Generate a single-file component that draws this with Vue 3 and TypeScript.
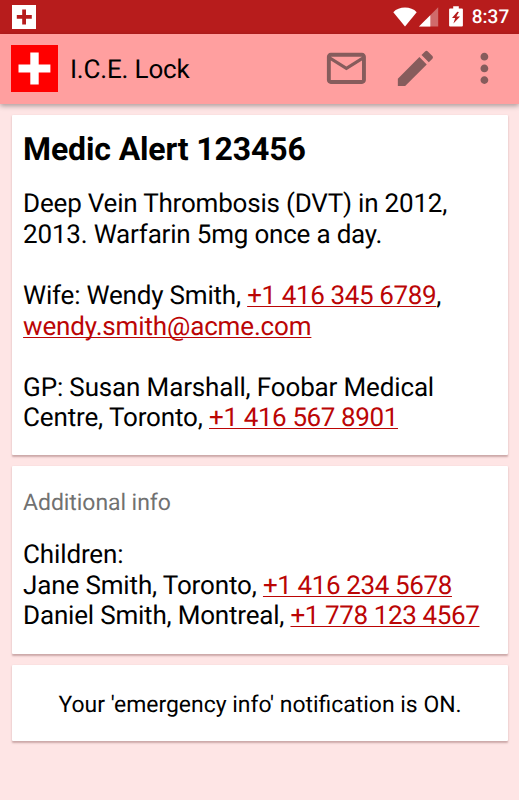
<script setup lang="ts">
interface Segment {
  text: string
  href?: string
  kind?: 'phone' | 'note'
}

type Line = Segment[]

const alertLines: Line[] = [
  [{ text: 'Deep Vein Thrombosis (DVT) in 2012,', kind: 'note' }],
  [{ text: '2013. Warfarin 5mg once a day.', kind: 'note' }],
  [],
  [
    { text: 'Wife: Wendy Smith, ', kind: 'note' },
    { text: '+1 416 345 6789', href: 'tel:+14163456789', kind: 'phone' },
    { text: ',' },
  ],
  [{ text: 'wendy.smith@acme.com', href: 'mailto:wendy.smith@acme.com' }],
  [],
  [{ text: 'GP: Susan Marshall, Foobar Medical' }],
  [
    { text: 'Centre, Toronto, ' },
    { text: '+1 416 567 8901', href: 'tel:+14165678901', kind: 'phone' },
  ],
]

const additionalLines: Line[] = [
  [{ text: 'Children:' }],
  [
    { text: 'Jane Smith, Toronto, ' },
    { text: '+1 416 234 5678', href: 'tel:+14162345678', kind: 'phone' },
  ],
  [
    { text: 'Daniel Smith, Montreal, ', kind: 'note' },
    { text: '+1 778 123 4567', href: 'tel:+17781234567', kind: 'phone' },
  ],
]
</script>

<template>
  <div class="screen">
    <div class="status-bar">
      <svg class="status-cross" viewBox="0 0 24 24">
        <rect width="24" height="24" fill="#fff" />
        <path d="M10.2 4.5h3.8v5.6h5.8v3.6H14v5.8h-3.8v-5.8H4.8v-3.6h5.4z" fill="#b71c1c" />
      </svg>
      <div class="status-icons">
        <svg class="wifi" viewBox="0 0 24 20">
          <path d="M12 19.6 .3 5.2C3.2 2 7.3.5 12 .5s8.8 1.5 11.7 4.7z" fill="#fff" />
        </svg>
        <svg class="signal" viewBox="0 0 20 20">
          <path d="M0 19.5 19.2.3v19.2z" fill="#fff" opacity=".35" />
          <path d="M0 19.5 11.3 8.2v11.3z" fill="#fff" />
        </svg>
        <svg class="battery" viewBox="0 0 14 21">
          <path
            fill="#fff"
            fill-rule="evenodd"
            d="M4.2 .3h5.6v2.2h3.1q1 0 1 1v16q0 1-1 1H1.1q-1 0-1-1v-16q0-1 1-1h3.1zM8.3 5.7 3 12.1h3.2l-1.8 5.5 6.7-7.2H7.4l2.5-4.3z"
          />
        </svg>
        <span class="clock">8:37</span>
      </div>
    </div>

    <header class="app-bar">
      <svg class="logo" viewBox="0 0 47 47">
        <rect width="47" height="47" fill="#f00" />
        <path d="M19.3 7.6h8.4v11.8h11.7v8.2H27.7v11.8h-8.4V27.6H7.5v-8.2h11.8z" fill="#fff" />
      </svg>
      <h1 class="title">I.C.E. Lock</h1>
      <nav class="actions">
        <svg class="action-icon" viewBox="0 0 24 24">
          <path
            d="M20 4H4c-1.1 0-2 .9-2 2v12c0 1.1.9 2 2 2h16c1.1 0 2-.9 2-2V6c0-1.1-.9-2-2-2zm0 14H4V8l8 5 8-5v10zm-8-7L4 6h16l-8 5z"
          />
        </svg>
        <svg class="action-icon" viewBox="0 0 24 24">
          <path
            d="M3 17.25V21h3.75L17.81 9.94l-3.75-3.75L3 17.25zM20.71 7.04c.39-.39.39-1.02 0-1.41l-2.34-2.34c-.39-.39-1.02-.39-1.41 0l-1.83 1.83 3.75 3.75 1.83-1.83z"
          />
        </svg>
        <svg class="action-icon" viewBox="0 0 24 24">
          <path
            d="M12 8c1.1 0 2-.9 2-2s-.9-2-2-2-2 .9-2 2 .9 2 2 2zm0 2c-1.1 0-2 .9-2 2s.9 2 2 2 2-.9 2-2-.9-2-2-2zm0 6c-1.1 0-2 .9-2 2s.9 2 2 2 2-.9 2-2-.9-2-2-2z"
          />
        </svg>
      </nav>
    </header>

    <main class="cards">
      <section class="card alert-card">
        <h2 class="heading">Medic Alert 123456</h2>
        <p v-for="(line, i) in alertLines" :key="i" class="line">
          <template v-for="(seg, j) in line" :key="j"
            ><a v-if="seg.href" class="link" :class="seg.kind" :href="seg.href">{{ seg.text }}</a
            ><span v-else :class="seg.kind">{{ seg.text }}</span></template
          >
        </p>
      </section>

      <section class="card info-card">
        <h3 class="label">Additional info</h3>
        <p v-for="(line, i) in additionalLines" :key="i" class="line">
          <template v-for="(seg, j) in line" :key="j"
            ><a v-if="seg.href" class="link" :class="seg.kind" :href="seg.href">{{ seg.text }}</a
            ><span v-else :class="seg.kind">{{ seg.text }}</span></template
          >
        </p>
      </section>

      <section class="card notice-card">Your 'emergency info' notification is ON.</section>
    </main>
  </div>
</template>

<style>
body {
  background: #fee5e5;
}
</style>

<style scoped>
.screen {
  height: 800px;
  overflow: hidden;
  display: flex;
  flex-direction: column;
  background: #fee5e5;
  color: #000;
  font-family: Roboto, sans-serif;
  text-rendering: geometricPrecision;
}

.status-bar {
  height: 33.6px;
  flex: none;
  box-sizing: border-box;
  padding: 0 9.8px 0 12px;
  display: flex;
  align-items: center;
  justify-content: space-between;
  background: #b71c1c;
}

.status-cross {
  width: 24px;
  height: 24px;
}

.status-icons {
  display: flex;
  align-items: center;
}

.wifi {
  width: 24px;
  height: 20px;
  margin-right: 2px;
}

.signal {
  width: 20px;
  height: 20px;
  margin-right: 10px;
}

.battery {
  width: 14px;
  height: 21px;
  margin-right: 9px;
}

.clock {
  color: #fff;
  font-size: 19px;
  font-weight: 500;
  line-height: 36px;
}

.app-bar {
  height: 70.4px;
  flex: none;
  box-sizing: border-box;
  padding-left: 11.4px;
  display: flex;
  align-items: center;
  background: #ff9f9f;
  box-shadow: 0 2px 5px rgba(0, 0, 0, 0.32);
}

.logo {
  width: 47px;
  height: 47px;
}

.title {
  margin: 0 0 0 11.5px;
  padding-top: 2px;
  font-size: 26px;
  font-weight: 400;
  line-height: 32px;
  letter-spacing: -0.16px;
}

.actions {
  margin-left: auto;
  display: flex;
  gap: 22.4px;
  padding-right: 11.1px;
}

.action-icon {
  width: 46.8px;
  height: 46.8px;
  fill: #865c5c;
}

.cards {
  display: flex;
  flex-direction: column;
  gap: 11.2px;
  padding: 11px 10.8px 0 11.8px;
}

.card {
  box-sizing: border-box;
  padding: 0 11.3px;
  background: #fff;
  border-radius: 1px;
  box-shadow: 0 1.5px 2px rgba(90, 30, 30, 0.3);
}

.alert-card {
  height: 340px;
}

.info-card {
  height: 187.7px;
}

.notice-card {
  height: 76.3px;
  font-size: 22.95px;
  line-height: 80px;
  text-align: center;
}

.heading {
  margin: 0 0 21.3px;
  padding-top: 15px;
  font-size: 32px;
  font-weight: 700;
  line-height: 38px;
  letter-spacing: -0.14px;
}

.line {
  margin: 0;
  height: 30.6px;
  font-size: 26px;
  line-height: 30.6px;
  letter-spacing: -0.15px;
  white-space: pre;
}

.note {
  letter-spacing: -0.2px;
}

.link {
  color: #bb0505;
  text-decoration: underline;
  text-decoration-thickness: 1.3px;
  text-underline-offset: 2px;
  text-decoration-skip-ink: none;
}

.phone {
  letter-spacing: -0.39px;
}

.label {
  margin: 0 0 24px;
  padding-top: 23px;
  color: #717171;
  font-size: 23px;
  font-weight: 400;
  line-height: 27px;
  letter-spacing: -0.07px;
}
</style>
